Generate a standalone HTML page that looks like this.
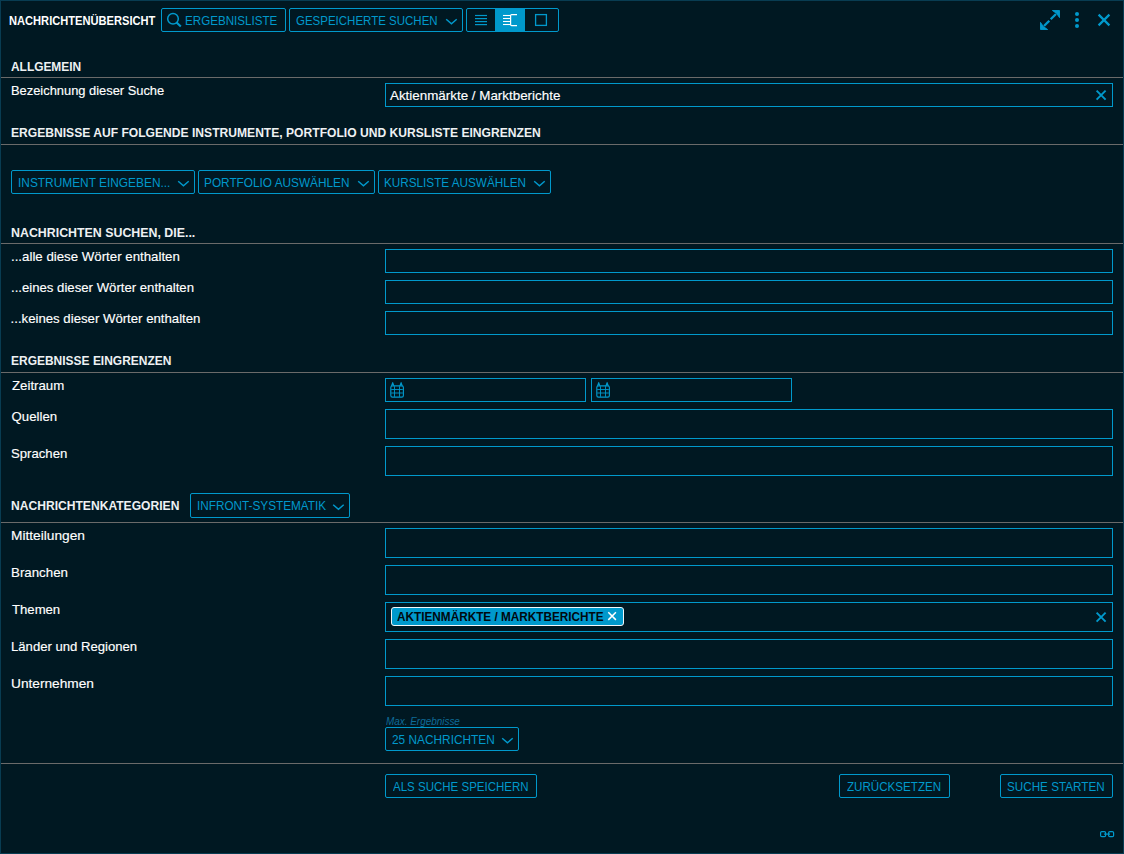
<!DOCTYPE html>
<html><head><meta charset="utf-8"><title>Nachrichtenübersicht</title>
<style>
html,body{margin:0;padding:0;}
body{width:1124px;height:854px;overflow:hidden;background:#001822;position:relative;font-family:"Liberation Sans",sans-serif;}
.t{position:absolute;white-space:nowrap;transform-origin:0 0;}
.bx{position:absolute;box-sizing:border-box;border:1px solid #0099cc;}
.sep{position:absolute;left:1px;width:1122px;height:1px;background:#6a6a6a;}
</style></head><body>
<div style="position:absolute;left:0;top:0;width:1124px;height:854px;box-sizing:border-box;border:1px solid #083c52"></div>
<div class="sep" style="top:77px"></div>
<div class="sep" style="top:144px"></div>
<div class="sep" style="top:243px"></div>
<div class="sep" style="top:372px"></div>
<div class="sep" style="top:522px"></div>
<div class="sep" style="top:763px"></div>
<div class="bx" style="left:161px;top:8px;width:125px;height:24px;border-radius:2px"></div>
<div class="bx" style="left:289px;top:8px;width:174px;height:24px;border-radius:2px"></div>
<div class="bx" style="left:466px;top:8px;width:93px;height:24px;border-radius:2px"></div>
<div style="position:absolute;left:495px;top:9px;width:30px;height:22px;background:#0099cc"></div>
<div class="bx" style="left:385px;top:83px;width:728px;height:24px;"></div>
<div class="bx" style="left:11px;top:170px;width:184px;height:24px;border-radius:2px"></div>
<div class="bx" style="left:198px;top:170px;width:177px;height:24px;border-radius:2px"></div>
<div class="bx" style="left:378px;top:170px;width:173px;height:24px;border-radius:2px"></div>
<div class="bx" style="left:385px;top:249px;width:728px;height:24px;"></div>
<div class="bx" style="left:385px;top:280px;width:728px;height:24px;"></div>
<div class="bx" style="left:385px;top:311px;width:728px;height:24px;"></div>
<div class="bx" style="left:385px;top:378px;width:201px;height:24px;"></div>
<div class="bx" style="left:591px;top:378px;width:201px;height:24px;"></div>
<div class="bx" style="left:385px;top:409px;width:728px;height:30px;"></div>
<div class="bx" style="left:385px;top:446px;width:728px;height:30px;"></div>
<div class="bx" style="left:190px;top:493px;width:160px;height:25px;border-radius:2px"></div>
<div class="bx" style="left:385px;top:528px;width:728px;height:30px;"></div>
<div class="bx" style="left:385px;top:565px;width:728px;height:30px;"></div>
<div class="bx" style="left:385px;top:602px;width:728px;height:30px;"></div>
<div class="bx" style="left:385px;top:639px;width:728px;height:30px;"></div>
<div class="bx" style="left:385px;top:676px;width:728px;height:30px;"></div>
<div style="position:absolute;left:391px;top:607px;width:233px;height:19px;box-sizing:border-box;border:1px solid #f2f6f8;border-radius:3px;background:#0099cc"></div>
<div class="bx" style="left:385px;top:727px;width:134px;height:24px;border-radius:2px"></div>
<div class="bx" style="left:385px;top:774px;width:152px;height:24px;border-radius:2px"></div>
<div class="bx" style="left:839px;top:774px;width:111px;height:24px;border-radius:2px"></div>
<div class="bx" style="left:1000px;top:774px;width:113px;height:24px;border-radius:2px"></div>
<div class="t" style="left:8.50px;top:15.0px;font-size:12.6px;line-height:12.6px;color:#ffffff;font-weight:700;transform:scaleX(0.8825);">NACHRICHTENÜBERSICHT</div>
<div class="t" style="left:185.08px;top:15.0px;font-size:12.6px;line-height:12.6px;color:#0099cc;transform:scaleX(0.9222);">ERGEBNISLISTE</div>
<div class="t" style="left:296.20px;top:15.0px;font-size:12.6px;line-height:12.6px;color:#0099cc;transform:scaleX(0.9129);">GESPEICHERTE SUCHEN</div>
<div class="t" style="left:11.10px;top:61.0px;font-size:12.6px;line-height:12.6px;color:#eef1f3;font-weight:700;transform:scaleX(0.9459);">ALLGEMEIN</div>
<div class="t" style="left:11.02px;top:84.0px;font-size:13.2px;line-height:13.2px;color:#ffffff;-webkit-text-stroke:0.15px #fff;transform:scaleX(0.9763);">Bezeichnung dieser Suche</div>
<div class="t" style="left:390.00px;top:89.0px;font-size:13.2px;line-height:13.2px;color:#ffffff;-webkit-text-stroke:0.15px #fff;transform:scaleX(1.0149);">Aktienmärkte / Marktberichte</div>
<div class="t" style="left:11.00px;top:127.0px;font-size:12.6px;line-height:12.6px;color:#eef1f3;font-weight:700;transform:scaleX(0.9603);">ERGEBNISSE AUF FOLGENDE INSTRUMENTE, PORTFOLIO UND KURSLISTE EINGRENZEN</div>
<div class="t" style="left:17.76px;top:177.0px;font-size:12.6px;line-height:12.6px;color:#0099cc;transform:scaleX(0.9441);">INSTRUMENT EINGEBEN...</div>
<div class="t" style="left:204.06px;top:177.0px;font-size:12.6px;line-height:12.6px;color:#0099cc;transform:scaleX(0.9377);">PORTFOLIO AUSWÄHLEN</div>
<div class="t" style="left:384.47px;top:177.0px;font-size:12.6px;line-height:12.6px;color:#0099cc;transform:scaleX(0.9305);">KURSLISTE AUSWÄHLEN</div>
<div class="t" style="left:11.00px;top:227.0px;font-size:12.6px;line-height:12.6px;color:#eef1f3;font-weight:700;transform:scaleX(0.9829);">NACHRICHTEN SUCHEN, DIE...</div>
<div class="t" style="left:10.59px;top:250.0px;font-size:13.2px;line-height:13.2px;color:#ffffff;-webkit-text-stroke:0.15px #fff;transform:scaleX(1.006);">...alle diese Wörter enthalten</div>
<div class="t" style="left:10.60px;top:281.0px;font-size:13.2px;line-height:13.2px;color:#ffffff;-webkit-text-stroke:0.15px #fff;transform:scaleX(0.9984);">...eines dieser Wörter enthalten</div>
<div class="t" style="left:10.60px;top:312.0px;font-size:13.2px;line-height:13.2px;color:#ffffff;-webkit-text-stroke:0.15px #fff;">...keines dieser Wörter enthalten</div>
<div class="t" style="left:11.00px;top:355.0px;font-size:12.6px;line-height:12.6px;color:#eef1f3;font-weight:700;transform:scaleX(0.9512);">ERGEBNISSE EINGRENZEN</div>
<div class="t" style="left:11.60px;top:379.0px;font-size:13.2px;line-height:13.2px;color:#ffffff;-webkit-text-stroke:0.15px #fff;transform:scaleX(1.0038);">Zeitraum</div>
<div class="t" style="left:11.60px;top:410.0px;font-size:13.2px;line-height:13.2px;color:#ffffff;-webkit-text-stroke:0.15px #fff;">Quellen</div>
<div class="t" style="left:10.60px;top:447.0px;font-size:13.2px;line-height:13.2px;color:#ffffff;-webkit-text-stroke:0.15px #fff;transform:scaleX(0.9964);">Sprachen</div>
<div class="t" style="left:11.00px;top:500.0px;font-size:12.6px;line-height:12.6px;color:#eef1f3;font-weight:700;transform:scaleX(0.96);">NACHRICHTENKATEGORIEN</div>
<div class="t" style="left:197.07px;top:500.0px;font-size:12.6px;line-height:12.6px;color:#0099cc;transform:scaleX(0.9328);">INFRONT-SYSTEMATIK</div>
<div class="t" style="left:10.56px;top:529.0px;font-size:13.2px;line-height:13.2px;color:#ffffff;-webkit-text-stroke:0.15px #fff;transform:scaleX(1.04);">Mitteilungen</div>
<div class="t" style="left:10.59px;top:566.0px;font-size:13.2px;line-height:13.2px;color:#ffffff;-webkit-text-stroke:0.15px #fff;transform:scaleX(1.0091);">Branchen</div>
<div class="t" style="left:11.60px;top:603.0px;font-size:13.2px;line-height:13.2px;color:#ffffff;-webkit-text-stroke:0.15px #fff;transform:scaleX(0.9958);">Themen</div>
<div class="t" style="left:10.61px;top:640.0px;font-size:13.2px;line-height:13.2px;color:#ffffff;-webkit-text-stroke:0.15px #fff;transform:scaleX(0.9944);">Länder und Regionen</div>
<div class="t" style="left:10.56px;top:677.0px;font-size:13.2px;line-height:13.2px;color:#ffffff;-webkit-text-stroke:0.15px #fff;transform:scaleX(1.0385);">Unternehmen</div>
<div class="t" style="left:397.00px;top:611.0px;font-size:12.6px;line-height:12.6px;color:#00080e;font-weight:700;transform:scaleX(0.9348);">AKTIENMÄRKTE / MARKTBERICHTE</div>
<div class="t" style="left:385.60px;top:717.0px;font-size:10px;line-height:10px;color:#0f6b98;font-style:italic;transform:scaleX(0.992);">Max. Ergebnisse</div>
<div class="t" style="left:392.00px;top:734.0px;font-size:12.6px;line-height:12.6px;color:#0099cc;transform:scaleX(0.9413);">25 NACHRICHTEN</div>
<div class="t" style="left:393.10px;top:781.0px;font-size:12.6px;line-height:12.6px;color:#0099cc;transform:scaleX(0.9142);">ALS SUCHE SPEICHERN</div>
<div class="t" style="left:847.00px;top:781.0px;font-size:12.6px;line-height:12.6px;color:#0099cc;transform:scaleX(0.9216);">ZURÜCKSETZEN</div>
<div class="t" style="left:1006.87px;top:781.0px;font-size:12.6px;line-height:12.6px;color:#0099cc;transform:scaleX(0.9279);">SUCHE STARTEN</div>
<svg style="position:absolute;left:0;top:0" width="1124" height="854" viewBox="0 0 1124 854"><circle cx="173" cy="18.8" r="5.3" fill="none" stroke="#0099cc" stroke-width="1.5"/><line x1="176.6" y1="22.4" x2="180.8" y2="26.6" stroke="#0099cc" stroke-width="2.1"/><polyline points="446.2,19.3 451.45,23.8 456.7,19.3" fill="none" stroke="#0099cc" stroke-width="1.5"/><polyline points="178.2,181.3 183.45,185.8 188.7,181.3" fill="none" stroke="#0099cc" stroke-width="1.5"/><polyline points="358.2,181.3 363.45,185.8 368.7,181.3" fill="none" stroke="#0099cc" stroke-width="1.5"/><polyline points="534.2,181.3 539.45,185.8 544.7,181.3" fill="none" stroke="#0099cc" stroke-width="1.5"/><polyline points="333.2,504.8 338.45,509.3 343.7,504.8" fill="none" stroke="#0099cc" stroke-width="1.5"/><polyline points="502.2,738.3 507.45000000000005,742.8 512.7,738.3" fill="none" stroke="#0099cc" stroke-width="1.5"/><line x1="475" y1="15.5" x2="487" y2="15.5" stroke="#0099cc" stroke-width="1.2"/><line x1="475" y1="18.6" x2="487" y2="18.6" stroke="#0099cc" stroke-width="1.2"/><line x1="475" y1="21.6" x2="487" y2="21.6" stroke="#0099cc" stroke-width="1.2"/><line x1="475" y1="24.6" x2="487" y2="24.6" stroke="#0099cc" stroke-width="1.2"/><line x1="503" y1="15.5" x2="510.5" y2="15.5" stroke="#ffffff" stroke-width="1.1"/><line x1="503" y1="18.5" x2="510.5" y2="18.5" stroke="#ffffff" stroke-width="1.1"/><line x1="503" y1="21.5" x2="510.5" y2="21.5" stroke="#ffffff" stroke-width="1.1"/><line x1="503" y1="24.5" x2="510.5" y2="24.5" stroke="#ffffff" stroke-width="1.1"/><path d="M517,14.6 H511.6 Q510.6,14.6 510.6,15.6 V24.6 Q510.6,25.6 511.6,25.6 H517" fill="none" stroke="#ffffff" stroke-width="1.2"/><rect x="535.6" y="14.6" width="10.8" height="10.8" fill="none" stroke="#0099cc" stroke-width="1.3"/><polygon points="1052.4,10.5 1059.5,10.5 1059.5,17.6 1056.6,13.4" fill="#0099cc" stroke="#0099cc" stroke-width="0.9" stroke-linejoin="round"/><polygon points="1040.5,22.4 1040.5,29.5 1047.6,29.5 1043.4,26.6" fill="#0099cc" stroke="#0099cc" stroke-width="0.9" stroke-linejoin="round"/><line x1="1044" y1="26" x2="1049.3" y2="20.7" stroke="#0099cc" stroke-width="2.3"/><line x1="1050.7" y1="19.3" x2="1056" y2="14" stroke="#0099cc" stroke-width="2.3"/><circle cx="1077" cy="13.9" r="2" fill="#0099cc"/><circle cx="1077" cy="19.9" r="2" fill="#0099cc"/><circle cx="1077" cy="25.9" r="2" fill="#0099cc"/><path d="M1098.6,14.6 L1109.3999999999999,25.4 M1109.3999999999999,14.6 L1098.6,25.4" stroke="#0099cc" stroke-width="2.2" fill="none"/><path d="M1096.6,90.6 L1105.6,99.6 M1105.6,90.6 L1096.6,99.6" stroke="#0099cc" stroke-width="1.9" fill="none"/><path d="M1096.6,612.6 L1105.6,621.6 M1105.6,612.6 L1096.6,621.6" stroke="#0099cc" stroke-width="1.9" fill="none"/><path d="M608.3,612.3 L615.9,619.9 M615.9,612.3 L608.3,619.9" stroke="#ffffff" stroke-width="1.5" fill="none"/><rect x="390.8" y="385.8" width="12.6" height="11.4" rx="1.6" fill="none" stroke="#0099cc" stroke-width="1.15"/><line x1="394.5" y1="386.2" x2="394.5" y2="396.8" stroke="#0099cc" stroke-width="0.9"/><line x1="399.5" y1="386.2" x2="399.5" y2="396.8" stroke="#0099cc" stroke-width="0.9"/><line x1="391.2" y1="389.5" x2="402.8" y2="389.5" stroke="#0099cc" stroke-width="0.9"/><line x1="391.2" y1="393.0" x2="402.8" y2="393.0" stroke="#0099cc" stroke-width="0.9"/><path d="M391.5,386 L392.7,382.6 L393.9,386" fill="none" stroke="#0099cc" stroke-width="1.1" stroke-linejoin="round"/><path d="M399.90000000000003,386 L401.1,382.6 L402.3,386" fill="none" stroke="#0099cc" stroke-width="1.1" stroke-linejoin="round"/><rect x="596.8" y="385.8" width="12.6" height="11.4" rx="1.6" fill="none" stroke="#0099cc" stroke-width="1.15"/><line x1="600.5" y1="386.2" x2="600.5" y2="396.8" stroke="#0099cc" stroke-width="0.9"/><line x1="605.5" y1="386.2" x2="605.5" y2="396.8" stroke="#0099cc" stroke-width="0.9"/><line x1="597.2" y1="389.5" x2="608.8" y2="389.5" stroke="#0099cc" stroke-width="0.9"/><line x1="597.2" y1="393.0" x2="608.8" y2="393.0" stroke="#0099cc" stroke-width="0.9"/><path d="M597.5,386 L598.7,382.6 L599.9000000000001,386" fill="none" stroke="#0099cc" stroke-width="1.1" stroke-linejoin="round"/><path d="M605.9,386 L607.1,382.6 L608.3000000000001,386" fill="none" stroke="#0099cc" stroke-width="1.1" stroke-linejoin="round"/><rect x="1100.6" y="831.6" width="5" height="5" rx="1.2" fill="none" stroke="#0099cc" stroke-width="1.2"/><rect x="1108.6" y="831.6" width="5" height="5" rx="1.2" fill="none" stroke="#0099cc" stroke-width="1.2"/><line x1="1104" y1="834.1" x2="1110" y2="834.1" stroke="#0099cc" stroke-width="1.2"/></svg>
</body></html>
